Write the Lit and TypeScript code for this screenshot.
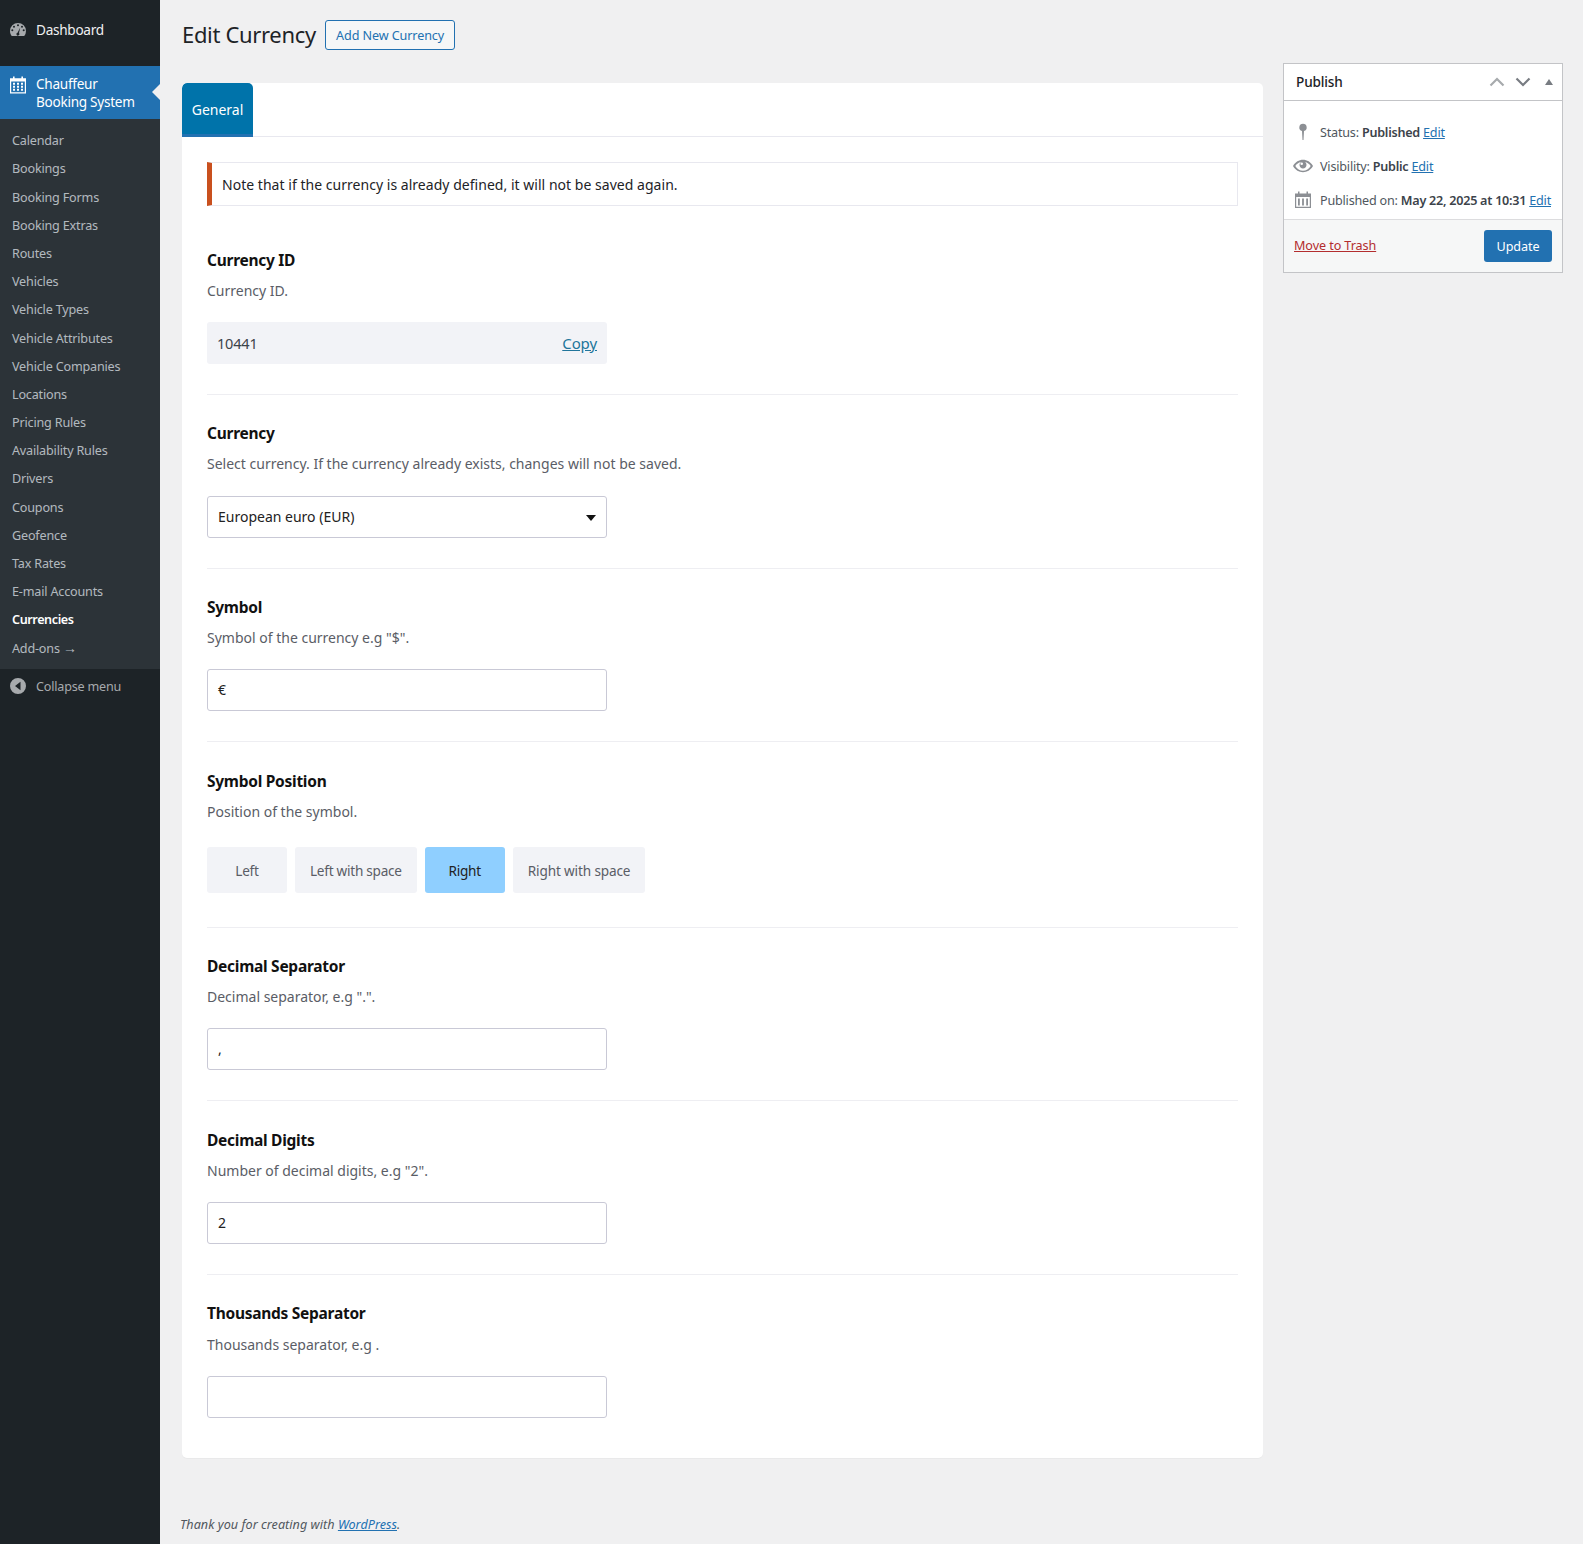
import { LitElement, html, css, svg } from "lit";
import { customElement } from "lit/decorators.js";

const SUB = ["Calendar","Bookings","Booking Forms","Booking Extras","Routes","Vehicles","Vehicle Types","Vehicle Attributes","Vehicle Companies","Locations","Pricing Rules","Availability Rules","Drivers","Coupons","Geofence","Tax Rates","E-mail Accounts","Currencies"];

const dash = svg`<svg viewBox="0 0 20 20" width="20" height="20"><path fill="currentColor" fill-rule="evenodd" d="M3.760 16h12.480A7.960 7.960 0 0 0 18 11a8 8 0 0 0-16 0c0 1.900.660 3.640 1.760 5zM10 4.200a1 1 0 1 1 0 2 1 1 0 0 1 0-2zM6 5.700a1 1 0 1 1 0 2 1 1 0 0 1 0-2zm8 0a1 1 0 1 1 0 2 1 1 0 0 1 0-2zM4.300 9.200a1 1 0 1 1 0 2 1 1 0 0 1 0-2zm11.400 0a1 1 0 1 1 0 2 1 1 0 0 1 0-2zM12.300 7.500l-1.300 5.600a1.500 1.500 0 1 1-1.500-.4z"/></svg>`;
const calAlt = svg`<svg viewBox="0 0 20 20" width="20" height="20"><path fill="currentColor" fill-rule="evenodd" d="M5 1.500h1.600v1.700h6.800V1.500H15v1.700h3V18.500H2V3.200h3zM3.200 6.400v10.900h13.600V6.400zM5 7.800h2v2H5zm4 0h2v2H9zm4 0h2v2h-2zM5 10.800h2v2H5zm4 0h2v2H9zm4 0h2v2h-2zM5 13.800h2v2H5zm4 0h2v2H9zm4 0h2v2h-2z"/></svg>`;
const pin = svg`<svg viewBox="0 0 20 20" width="20" height="20"><path fill="currentColor" d="M10 1.800a3.700 3.700 0 0 1 1 7.260L10.500 18h-1L9 9.060A3.700 3.700 0 0 1 10 1.800z"/></svg>`;
const eye = svg`<svg viewBox="0 0 20 20" width="20" height="20"><path fill="currentColor" fill-rule="evenodd" d="M19.700 9.400C17.700 6 14 3.700 10 3.700S2.300 6 .3 9.400L0 10l.3.600c2 3.400 5.700 5.700 9.700 5.700s7.700-2.300 9.700-5.700l.3-.6-.3-.6zM10 14.800c-3.100 0-6-1.900-7.700-4.800C3.600 8 5.700 6.600 8 6.100c-.9.600-1.500 1.700-1.500 2.900 0 1.900 1.600 3.500 3.500 3.500s3.500-1.600 3.500-3.500c0-1.200-.6-2.300-1.500-2.900 2.300.5 4.400 1.900 5.700 3.900-1.700 2.900-4.600 4.800-7.700 4.800zM8.700 6.500a1.300 1.300 0 1 1 0 2.600 1.300 1.300 0 0 1 0-2.600z"/></svg>`;
const cal = svg`<svg viewBox="0 0 20 20" width="20" height="20"><path fill="currentColor" fill-rule="evenodd" d="M5 1.500h1.500v2h7v-2H15v2h3V18H2V3.500h3zM3.200 7v9.800h13.600V7zM5 8.500h1.800v7H5zm4.100 0h1.800v7H9.100zm4.100 0H15v7h-1.800z"/></svg>`;
const collapse = svg`<svg viewBox="0 0 20 20" width="20" height="20"><path fill="currentColor" fill-rule="evenodd" d="M10 2a8 8 0 1 1 0 16 8 8 0 0 1 0-16zm2.500 3.800L7 10l5.500 4.200z"/></svg>`;

@customElement("app-root")
export class AppRoot extends LitElement {
  static styles = css`
    :host { display: block; font-family: "Noto Sans", sans-serif; font-size: 13px; line-height: 1.4; letter-spacing: -0.28px; color: #3c434a; background: #f0f0f1; min-height: 1544px; }
    * { box-sizing: border-box; }
    a { color: #2271b1; }
    .page { display: grid; grid-template-columns: 160px 1fr; min-height: 1544px; }
    .side { background: #1d2327; color: #f0f0f1; padding-top: 12px; font-size: 13.6px; letter-spacing: -0.28px; }
    .top { display: flex; align-items: center; height: 36px; color: #f0f0f1; }
    .ico { width: 36px; display: flex; justify-content: center; color: #a7aaad; flex: none; }
    .active { margin-top: 18px; height: 53px; background: #2271b1; color: #fff; display: flex; position: relative; padding-top: 9px; line-height: 18px; }
    .active .ico { color: #fff; align-items: flex-start; }
    .active::after { content: ""; position: absolute; right: 0; top: 18px; border: 8px solid transparent; border-right-color: #f0f0f1; border-left: 0; }
    .sub { background: #2c3338; padding: 7.2px 0 6.8px; font-size: 12.6px; letter-spacing: -0.18px; }
    .sub div { padding: 6px 12px 4px; color: rgba(240,246,252,.7); height: 28.2px; line-height: 18.2px; }
    .sub .cur { color: #fff; font-weight: 600; letter-spacing: -0.4px; }
    .arrow { font-family: "Liberation Sans", sans-serif; font-size: 14px; letter-spacing: 0; line-height: 0; }
    .collapse { display: flex; align-items: center; height: 34px; color: #a7aaad; font-size: 12.6px; letter-spacing: -0.2px; }
    .collapse span:last-child { padding-top: 2px; }
    .collapse .ico { color: #a7aaad; }
    .main { padding: 0 20px 0 22px; display: flex; flex-direction: column; }
    .head { display: flex; align-items: center; gap: 9px; height: 50px; padding-top: 20px; }
    h1 { margin: 0 0 2px; font-size: 22px; font-weight: 400; color: #1d2327; line-height: 30px; letter-spacing: -0.33px; }
    .add { height: 30px; width: 130.500px; justify-content: center; border: 1px solid #2271b1; border-radius: 3px; background: #f6f7f7; color: #2271b1; font-size: 12.6px; letter-spacing: -0.1px; display: flex; align-items: center; padding-top: 2px; }
    .cols { display: grid; grid-template-columns: 1081px 280px; gap: 20px; margin-top: 13px; align-items: start; }
    .panel { margin-top: 20px; background: #fff; border-radius: 5px; height: 1375px; overflow: hidden; box-shadow: 0 1px 1px rgba(0,0,0,.03); letter-spacing: 0; }
    .tabs { height: 54px; border-bottom: 1px solid #e8e8ef; }
    .tab { display: inline-flex; align-items: center; width: 71px; height: 54px; padding-top: 2px; justify-content: center; background: #0073aa; border-bottom: 3px solid #2271b1; border-top-left-radius: 5px; border-top-right-radius: 5px; color: #fff; font-size: 14px; }
    .body { padding: 25px 25px 0; }
    .notice { height: 44px; border: 1px solid #e8e8ef; border-left: 5px solid #c9501e; padding: 2px 0 0 10px; display: flex; align-items: center; font-size: 14px; color: #1d2327; letter-spacing: 0.03px; }
    .notice + .sec { margin-top: 15.500px; }
    .sec { padding: 27.400px 0 30px; border-bottom: 1px solid #eeeef2; }
    .sec.pos { padding-bottom: 33.600px; }
    .sec.pos .d { margin-bottom: 25.400px; }
    .sec.last { border: 0; }
    .sec.last .d { margin-top: 10.600px; margin-bottom: 21.600px; }
    .t { font-size: 15.5px; font-weight: 700; color: #111; line-height: 22px; letter-spacing: -0.27px; }
    .d { font-size: 14px; color: #5a5d66; line-height: 20px; margin-top: 10px; margin-bottom: 21.200px; }
    .field { width: 400px; height: 42px; border: 1px solid #c9c9d6; border-radius: 3px; background: #fff; display: flex; align-items: center; padding: 0 10px; font-size: 14px; color: #222; position: relative; }
    .idf { background: #f2f3f7; border: 0; justify-content: space-between; color: #3c434a; font-size: 14.5px; letter-spacing: -0.2px; }
    .idf a { color: #21759b; font-size: 15px; letter-spacing: -0.1px; }
    .caret { position: absolute; right: 10px; top: 18px; border: 5px solid transparent; border-top: 6px solid #111; border-bottom: 0; }
    .btns { display: flex; gap: 8px; }
    .btns div { height: 46px; display: flex; align-items: center; padding: 0 15px; background: #f2f3f7; border-radius: 3px; color: #5a5d66; font-size: 13.6px; letter-spacing: -0.26px; }
    .btns div:last-child { letter-spacing: -0.14px; }
    .btns .l { width: 80px; justify-content: center; }
    .btns .on { background: #8fcfff; color: #222; }
    .box { background: #fff; border: 1px solid #c3c4c7; height: 210px; display: flex; flex-direction: column; }
    .bh { height: 37px; border-bottom: 1px solid #c3c4c7; display: flex; align-items: center; padding: 0 0 0 12px; font-size: 13.6px; font-weight: 500; color: #1d2327; letter-spacing: -0.15px; }
    .bh > span { flex: 1; }
    .arrows { display: flex; align-items: center; }
    .arrows span { width: 26px; display: flex; justify-content: center; }
    .arrows svg { display: block; }
    .bb { flex: 1; padding: 14px 10px 0 9px; display: flex; flex-direction: column; }
    .r { height: 34px; display: flex; align-items: center; white-space: nowrap; color: #50575e; gap: 7px; font-size: 12.6px; letter-spacing: -0.2px; }
    .r span { padding-top: 2px; }
    .r svg { flex: none; color: #8c8f94; }
    .r b { font-weight: 600; color: #3c434a; letter-spacing: -0.25px; }
    .bf { height: 53px; background: #f6f7f7; border-top: 1px solid #dcdcde; display: flex; align-items: center; justify-content: space-between; padding: 0 10px; font-size: 12.6px; letter-spacing: -0.08px; }
    .bf a { color: #b32d2e; }
    .upd { background: #2271b1; color: #fff; height: 32px; width: 68px; border-radius: 3px; display: flex; align-items: center; justify-content: center; padding-top: 2px; }
    .foot { margin: 58px 0 0 -2px; font-style: italic; color: #50575e; font-size: 12.6px; letter-spacing: 0.04px; }
    .foot a { color: #2271b1; }
  `;

  private sec(t: string, d: string, v: string, cls = "") {
    return html`<div class="sec ${cls}"><div class="t">${t}</div><div class="d">${d}</div><div class="field">${v}</div></div>`;
  }

  render() {
    return html`<div class="page">
      <aside class="side">
        <div class="top"><span class="ico">${dash}</span>Dashboard</div>
        <div class="active"><span class="ico">${calAlt}</span><span>Chauffeur<br />Booking System</span></div>
        <div class="sub">${SUB.map((s) => html`<div class=${s === "Currencies" ? "cur" : ""}>${s}</div>`)}<div>Add-ons <span class="arrow">→</span></div></div>
        <div class="collapse"><span class="ico">${collapse}</span><span>Collapse menu</span></div>
      </aside>
      <main class="main">
        <div class="head"><h1>Edit Currency</h1><span class="add">Add New Currency</span></div>
        <div class="cols">
          <section class="panel">
            <div class="tabs"><span class="tab">General</span></div>
            <div class="body">
              <div class="notice">Note that if the currency is already defined, it will not be saved again.</div>
              <div class="sec"><div class="t">Currency ID</div><div class="d">Currency ID.</div><div class="field idf"><span>10441</span><a href="#">Copy</a></div></div>
              <div class="sec"><div class="t">Currency</div><div class="d">Select currency. If the currency already exists, changes will not be saved.</div><div class="field">European euro (EUR)<i class="caret"></i></div></div>
              ${this.sec("Symbol", 'Symbol of the currency e.g "$".', "€")}
              <div class="sec pos"><div class="t">Symbol Position</div><div class="d">Position of the symbol.</div>
                <div class="btns"><div class="l">Left</div><div>Left with space</div><div class="l on">Right</div><div>Right with space</div></div></div>
              ${this.sec("Decimal Separator", 'Decimal separator, e.g ".".', ",")}
              ${this.sec("Decimal Digits", 'Number of decimal digits, e.g "2".', "2")}
              ${this.sec("Thousands Separator", "Thousands separator, e.g .", "", "last")}
            </div>
          </section>
          <aside class="box">
            <div class="bh"><span>Publish</span><div class="arrows">
              <span><svg width="16" height="10" viewBox="0 0 16 10"><path d="M1.500 8.500L8 2l6.500 6.500" fill="none" stroke="#a7aaad" stroke-width="2.200"/></svg></span>
              <span><svg width="16" height="10" viewBox="0 0 16 10"><path d="M1.500 1.500L8 8l6.500-6.500" fill="none" stroke="#787c82" stroke-width="2.200"/></svg></span>
              <span><svg width="8" height="6" viewBox="0 0 8 6"><path d="M4 0l4 6H0z" fill="#787c82"/></svg></span>
            </div></div>
            <div class="bb">
              <div class="r">${pin}<span>Status: <b>Published</b> <a href="#">Edit</a></span></div>
              <div class="r">${eye}<span>Visibility: <b>Public</b> <a href="#">Edit</a></span></div>
              <div class="r">${cal}<span>Published on: <b>May 22, 2025 at 10:31</b> <a href="#">Edit</a></span></div>
            </div>
            <div class="bf"><a href="#">Move to Trash</a><span class="upd">Update</span></div>
          </aside>
        </div>
        <div class="foot">Thank you for creating with <a href="#">WordPress</a>.</div>
      </main>
    </div>`;
  }
}
